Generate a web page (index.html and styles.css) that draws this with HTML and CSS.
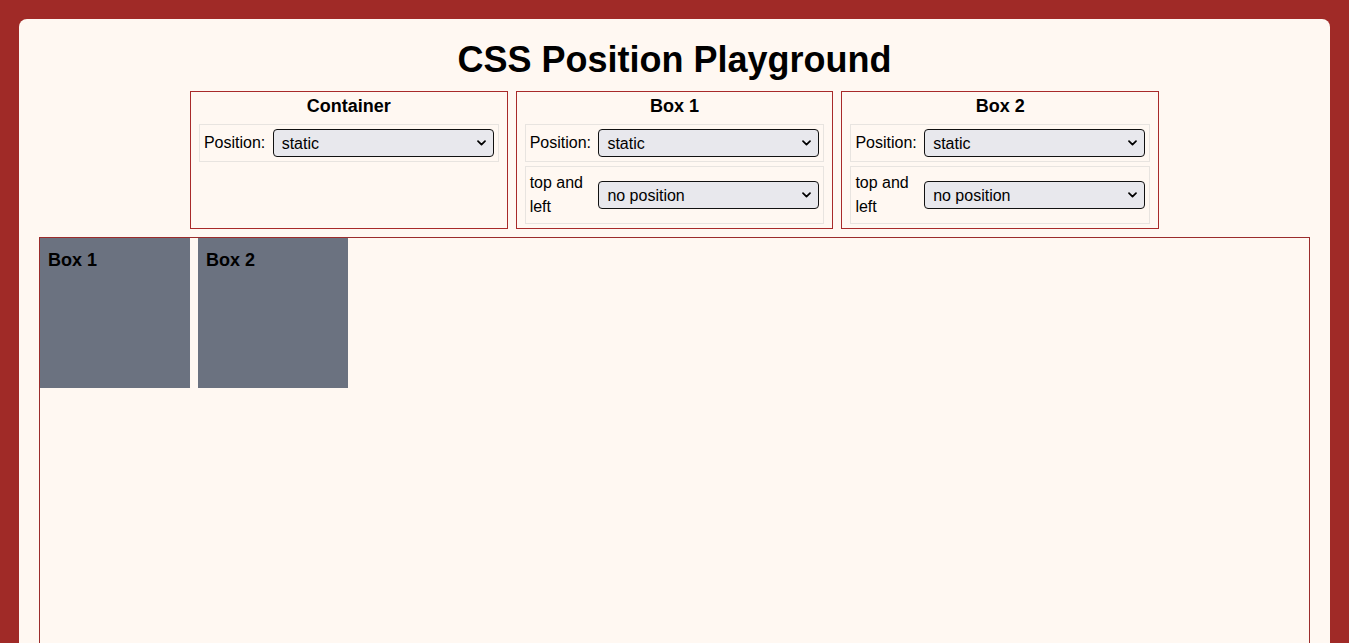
FILE: index.html
```html
<!DOCTYPE html>
<html lang="en">
<head>
<meta charset="utf-8">
<title>CSS Position Playground</title>
<link rel="stylesheet" href="styles.css">
</head>
<body>
<main class="card">
  <h1 class="title">CSS Position Playground</h1>
  <section class="controls">
    <div class="panel">
      <h3 class="panel-title">Container</h3>
      <div class="row">
        <label class="row-label">Position:</label>
        <select class="select"><option>static</option><option>relative</option><option>absolute</option><option>fixed</option><option>sticky</option></select>
      </div>
    </div>
    <div class="panel">
      <h3 class="panel-title">Box 1</h3>
      <div class="row">
        <label class="row-label">Position:</label>
        <select class="select"><option>static</option><option>relative</option><option>absolute</option><option>fixed</option><option>sticky</option></select>
      </div>
      <div class="row">
        <label class="row-label">top and left</label>
        <select class="select"><option>no position</option><option>10px</option><option>50px</option></select>
      </div>
    </div>
    <div class="panel">
      <h3 class="panel-title">Box 2</h3>
      <div class="row">
        <label class="row-label">Position:</label>
        <select class="select"><option>static</option><option>relative</option><option>absolute</option><option>fixed</option><option>sticky</option></select>
      </div>
      <div class="row">
        <label class="row-label">top and left</label>
        <select class="select"><option>no position</option><option>10px</option><option>50px</option></select>
      </div>
    </div>
  </section>
  <section class="stage">
    <div class="box">Box 1</div>
    <div class="box">Box 2</div>
  </section>
</main>
</body>
</html>
```
FILE: styles.css
```css
* { box-sizing: border-box; }
html, body { margin: 0; }
body {
  background: #a02a27;
  padding: 19px;
  font-family: "Liberation Sans", Arial, sans-serif;
  font-size: 16px;
  line-height: 1.5;
  color: #000;
}
.card {
  background: #fff8f2;
  border-radius: 8px;
  padding: 20px;
  min-height: 900px;
}
.title {
  margin: 0 0 10px;
  font-size: 36px;
  line-height: normal;
  text-align: center;
  font-weight: bold;
}
.controls {
  display: flex;
  justify-content: center;
  gap: 8px;
}
.panel {
  width: 25%;
  border: 1px solid #a82a2a;
  padding: 4px 8px 4px;
  display: flex;
  flex-direction: column;
  gap: 4px;
}
.panel-title {
  margin: 0 0 3px;
  font-size: 18px;
  line-height: normal;
  text-align: center;
  font-weight: bold;
}
.row {
  display: flex;
  align-items: center;
  gap: 8px;
  border: 1px solid #e8e4e0;
  padding: 4px;
}
.row-label {
  flex: 1;
  min-width: 0;
}
.select {
  -webkit-appearance: none;
  appearance: none;
  flex: 0 0 221px;
  width: 221px;
  height: 28px;
  font-family: "Liberation Sans", Arial, sans-serif;
  font-size: 16px;
  background-color: #e8e8ed;
  background-image: url("data:image/svg+xml,%3Csvg xmlns='http://www.w3.org/2000/svg' width='9' height='6' viewBox='0 0 9 6'%3E%3Cpath d='M1 1.2l3.5 3.5 3.5-3.5' fill='none' stroke='%23000' stroke-width='1.7' stroke-linecap='round' stroke-linejoin='round'/%3E%3C/svg%3E");
  background-repeat: no-repeat;
  background-position: right 7px center;
  background-size: 9px 6px;
  color: #000;
  border: 1px solid #111;
  border-radius: 4px;
  padding: 0 20px 0 8px;
}
.stage {
  margin-top: 8px;
  border: 1px solid #9b2c2c;
  height: 560px;
  display: flex;
  align-items: flex-start;
  gap: 8px;
}
.box {
  width: 150px;
  height: 150px;
  background: #6b7280;
  padding: 9px 8px 8px;
  font-size: 18px;
  font-weight: bold;
  line-height: 1.5;
}
```
